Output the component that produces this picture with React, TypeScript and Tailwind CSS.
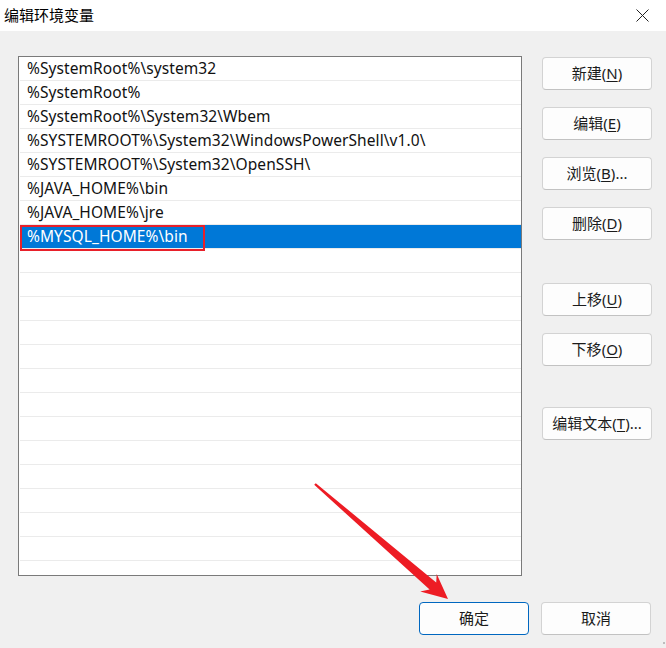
import React from 'react';

const rows = [
  '%SystemRoot%\\system32',
  '%SystemRoot%',
  '%SystemRoot%\\System32\\Wbem',
  '%SYSTEMROOT%\\System32\\WindowsPowerShell\\v1.0\\',
  '%SYSTEMROOT%\\System32\\OpenSSH\\',
  '%JAVA_HOME%\\bin',
  '%JAVA_HOME%\\jre',
  '%MYSQL_HOME%\\bin',
];

const font = { fontFamily: '"Noto Sans", "Noto Sans CJK SC", sans-serif' };

type BtnProps = {
  label: string;
  hotkey?: string;
  suffix?: string;
  className?: string;
  primary?: boolean;
};

const Btn = ({ label, hotkey, suffix, className = '', primary }: BtnProps) => (
  <button
    className={`w-[110px] h-[33px] rounded-[4px] bg-[#fdfdfd] text-[15px] text-[#1b1b1b] flex items-center justify-center leading-none ${
      primary ? 'border border-[#0067c0]' : 'border border-[#d3d3d3] border-b-[#c2c2c2]'
    } ${className}`}
  >
    <span>
      {label}
      {hotkey && (
        <>
          (<u className="underline-offset-2">{hotkey}</u>)
        </>
      )}
      {suffix}
    </span>
  </button>
);

export default function App() {
  return (
    <div className="relative w-[666px] h-[648px] overflow-hidden bg-[#f0f0f0] select-none" style={font}>
      {/* Title bar */}
      <div className="h-[31px] bg-white flex items-center justify-between pl-[4px] pr-[17px]">
        <span className="text-[15px] text-black">编辑环境变量</span>
        <svg width="13" height="13" viewBox="0 0 13 13">
          <path d="M0.5 0.5 L12.5 12.5 M12.5 0.5 L0.5 12.5" stroke="#222" strokeWidth="1" />
        </svg>
      </div>

      {/* Body */}
      <div className="flex pl-[18px] pt-[25px] gap-[20px]">
        {/* List */}
        <div className="w-[504px] h-[520px] border border-[#7a7a7a] bg-white overflow-hidden pl-[1px]">
          {Array.from({ length: 22 }).map((_, i) => {
            const text = rows[i];
            const selected = i === 7;
            return (
              <div
                key={i}
                className={`relative h-[24px] border-b border-[#ebebeb] flex items-center pl-[7px] text-[15.5px] tracking-[0.08px] whitespace-nowrap ${
                  selected ? 'bg-[#0078d7] text-white' : 'text-[#111]'
                }`}
              >
                {text}
                {selected && (
                  <div className="absolute left-[0px] top-[0px] w-[185px] h-[26px] border-2 border-[#e8202a]" />
                )}
              </div>
            );
          })}
        </div>

        {/* Right buttons */}
        <div className="flex flex-col pt-[1px]">
          <Btn label="新建" hotkey="N" />
          <Btn label="编辑" hotkey="E" className="mt-[17px]" />
          <Btn label="浏览" hotkey="B" suffix="..." className="mt-[17px]" />
          <Btn label="删除" hotkey="D" className="mt-[17px]" />
          <Btn label="上移" hotkey="U" className="mt-[43px]" />
          <Btn label="下移" hotkey="O" className="mt-[17px]" />
          <Btn label="编辑文本" hotkey="T" suffix="..." className="mt-[41px]" />
        </div>
      </div>

      {/* Bottom buttons */}
      <div className="flex justify-end gap-[12px] pr-[15px] pt-[26px]">
        <Btn label="确定" primary />
        <Btn label="取消" />
      </div>

      {/* Annotation arrow */}
      <svg className="absolute left-0 top-0 pointer-events-none" width="666" height="648">
        <polygon
          points="315.8,483.2 436.2,582.5 436.7,574.1 448,599 420.2,591.6 429.6,589.6 314.2,484.8"
          fill="#ed1c24"
        />
      </svg>

      {/* Resize grip */}
      <div className="absolute right-[1px] bottom-[4px] w-[2px] h-[2px] bg-[#bdbdbd]" />
    </div>
  );
}
